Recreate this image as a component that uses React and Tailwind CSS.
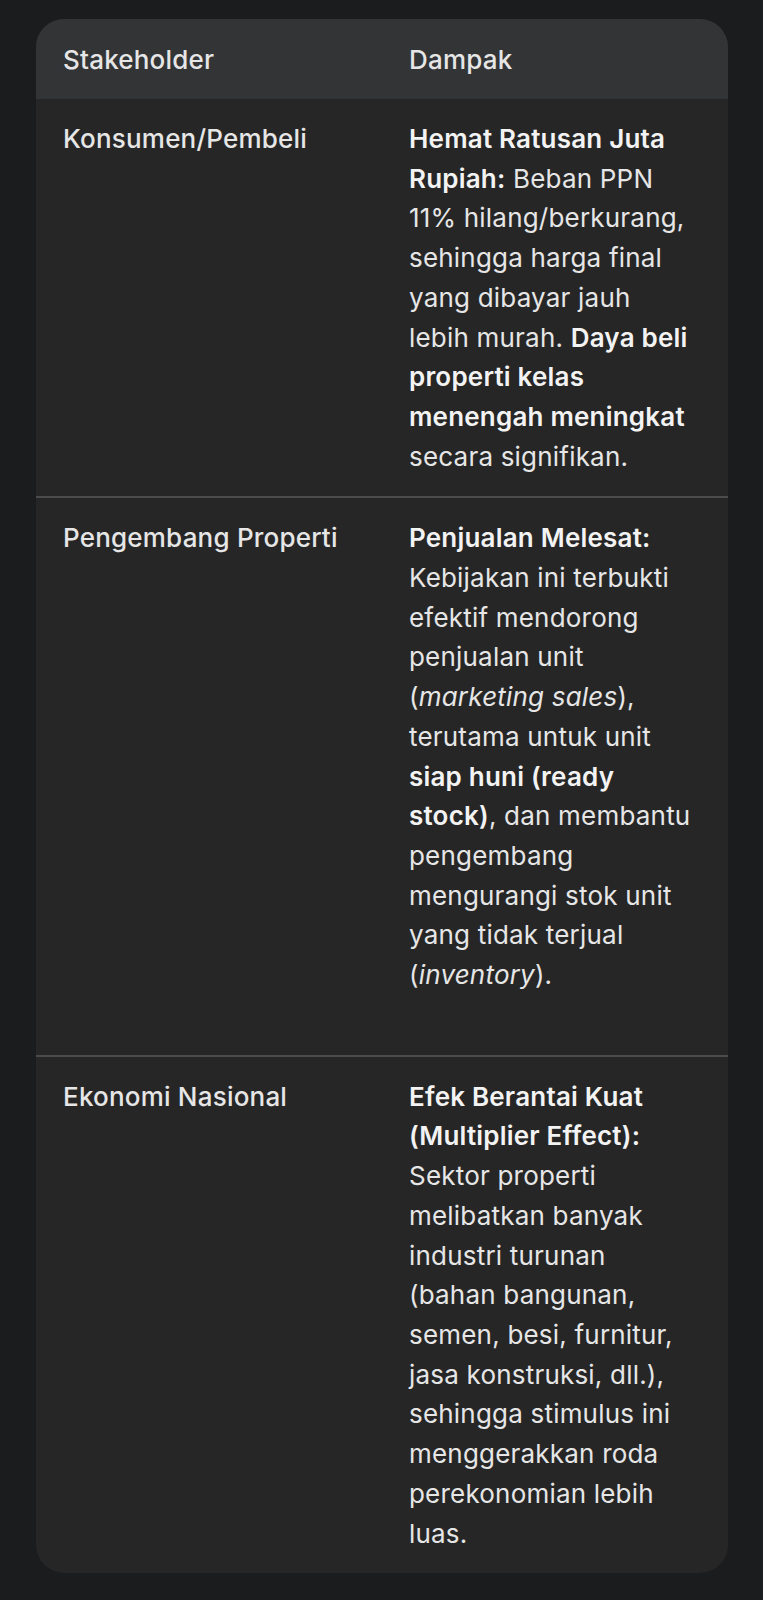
import React from 'react';

const B = ({ children }) => <span className="font-semibold text-[#f3f3f3]">{children}</span>;

const rows = [
    {
        who: 'Konsumen/Pembeli',
        lines: [
            <B>Hemat Ratusan Juta</B>,
            <><B>Rupiah:</B> Beban PPN</>,
            '11% hilang/berkurang,',
            'sehingga harga final',
            'yang dibayar jauh',
            <>lebih murah. <B>Daya beli</B></>,
            <B>properti kelas</B>,
            <B>menengah meningkat</B>,
            'secara signifikan.',
        ],
        pad: 'pb-[20px]',
    },
    {
        who: 'Pengembang Properti',
        lines: [
            <B>Penjualan Melesat:</B>,
            'Kebijakan ini terbukti',
            'efektif mendorong',
            'penjualan unit',
            <>(<i>marketing sales</i>),</>,
            'terutama untuk unit',
            <B>siap huni (ready</B>,
            <><B>stock)</B>, dan membantu</>,
            'pengembang',
            'mengurangi stok unit',
            'yang tidak terjual',
            <>(<i>inventory</i>).</>,
        ],
        pad: 'pb-[60px]',
    },
    {
        who: 'Ekonomi Nasional',
        lines: [
            <B>Efek Berantai Kuat</B>,
            <B>(Multiplier Effect):</B>,
            'Sektor properti',
            'melibatkan banyak',
            'industri turunan',
            '(bahan bangunan,',
            'semen, besi, furnitur,',
            'jasa konstruksi, dll.),',
            'sehingga stimulus ini',
            'menggerakkan roda',
            'perekonomian lebih',
            'luas.',
        ],
        pad: 'pb-[20px]',
    },
];

export default function App() {
    return (
        <div className="min-h-[1600px] bg-[#1b1c1e] pt-[19px] px-[36px] font-['Inter',sans-serif] text-[26px] tracking-[0.2px] text-[#e6e6e6]">
            <div className="rounded-[28px] overflow-hidden bg-[#262626] w-[692px]">
                {/* Header */}
                <div className="grid grid-cols-2 h-[80px] items-center bg-[#333436] font-medium">
                    <div className="px-[27px]">Stakeholder</div>
                    <div className="px-[27px]">Dampak</div>
                </div>

                {/* Body */}
                {rows.map((row, i) => (
                    <div
                        key={i}
                        className={`grid grid-cols-2 pt-[20px] leading-[39.7px] ${row.pad} ${i > 0 ? 'border-t-2 border-[#4a4b4d]' : ''}`}
                    >
                        <div className="px-[27px] font-medium">{row.who}</div>
                        <div className="px-[27px]">
                            {row.lines.map((line, j) => (
                                <div key={j} className="whitespace-nowrap">{line}</div>
                            ))}
                        </div>
                    </div>
                ))}
            </div>
        </div>
    );
}
